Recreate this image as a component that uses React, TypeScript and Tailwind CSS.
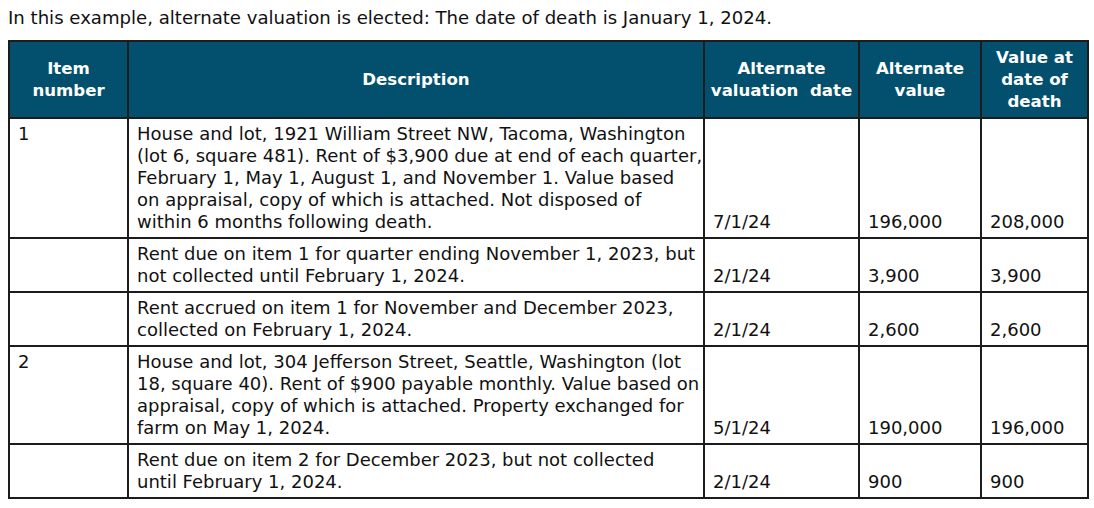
const rows = [
  {
    item: "1",
    desc: [
      "House and lot, 1921 William Street NW, Tacoma, Washington",
      "(lot 6, square 481). Rent of $3,900 due at end of each quarter,",
      "February 1, May 1, August 1, and November 1. Value based",
      "on appraisal, copy of which is attached. Not disposed of",
      "within 6 months following death.",
    ],
    date: "7/1/24",
    alt: "196,000",
    death: "208,000",
  },
  {
    item: "",
    desc: [
      "Rent due on item 1 for quarter ending November 1, 2023, but",
      "not collected until February 1, 2024.",
    ],
    date: "2/1/24",
    alt: "3,900",
    death: "3,900",
  },
  {
    item: "",
    desc: [
      "Rent accrued on item 1 for November and December 2023,",
      "collected on February 1, 2024.",
    ],
    date: "2/1/24",
    alt: "2,600",
    death: "2,600",
  },
  {
    item: "2",
    desc: [
      "House and lot, 304 Jefferson Street, Seattle, Washington (lot",
      "18, square 40). Rent of $900 payable monthly. Value based on",
      "appraisal, copy of which is attached. Property exchanged for",
      "farm on May 1, 2024.",
    ],
    date: "5/1/24",
    alt: "190,000",
    death: "196,000",
  },
  {
    item: "",
    desc: [
      "Rent due on item 2 for December 2023, but not collected",
      "until February 1, 2024.",
    ],
    date: "2/1/24",
    alt: "900",
    death: "900",
  },
];

export default function App() {
  return (
    <div className="w-[1094px] h-[508px] bg-white text-[#111] font-['DejaVu_Sans',sans-serif] text-[18px] leading-[22px]">
      <p className="pl-2 pt-[7px] h-[40px] text-[18.1px]">
        In this example, alternate valuation is elected: The date of death is January 1, 2024.
      </p>
      <table className="ml-2 w-[1079px] table-fixed border-collapse border-2 border-[#1c1c1c]">
        <colgroup>
          <col className="w-[119px]" />
          <col className="w-[576px]" />
          <col className="w-[155px]" />
          <col className="w-[122px]" />
          <col className="w-[107px]" />
        </colgroup>
        <thead>
          <tr className="h-[77px] bg-[#02506e] text-white font-bold text-center text-[16.6px]">
            <th className="border-2 border-[#1c1c1c] px-2">Item<br />number</th>
            <th className="border-2 border-[#1c1c1c] px-2">Description</th>
            <th className="border-2 border-[#1c1c1c] px-1 whitespace-pre">Alternate<br />valuation  date</th>
            <th className="border-2 border-[#1c1c1c] px-2">Alternate<br />value</th>
            <th className="border-2 border-[#1c1c1c] px-2">Value at<br />date of<br />death</th>
          </tr>
        </thead>
        <tbody>
          {rows.map((r, i) => (
            <tr key={i}>
              <td className="border-2 border-[#1c1c1c] pl-2 pt-[4px] pb-[4px] align-top">{r.item}</td>
              <td className="border-2 border-[#1c1c1c] pl-2 pt-[4px] pb-[4px] align-top whitespace-nowrap">
                {r.desc.map((line, j) => (
                  <div key={j}>{line}</div>
                ))}
              </td>
              <td className="border-2 border-[#1c1c1c] pl-2 pb-[4px] align-bottom">{r.date}</td>
              <td className="border-2 border-[#1c1c1c] pl-2 pb-[4px] align-bottom">{r.alt}</td>
              <td className="border-2 border-[#1c1c1c] pl-2 pb-[4px] align-bottom">{r.death}</td>
            </tr>
          ))}
        </tbody>
      </table>
    </div>
  );
}
